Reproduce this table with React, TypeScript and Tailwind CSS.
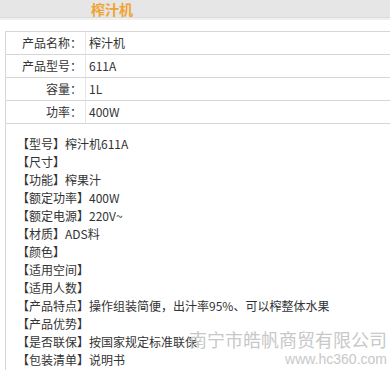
import React from "react";

const specs = [
  { label: "产品名称：", value: "榨汁机" },
  { label: "产品型号：", value: "611A" },
  { label: "容量：", value: "1L" },
  { label: "功率：", value: "400W" },
];

const details = [
  ["型号", "榨汁机611A"],
  ["尺寸", ""],
  ["功能", "榨果汁"],
  ["额定功率", "400W"],
  ["额定电源", "220V~"],
  ["材质", "ADS料"],
  ["颜色", ""],
  ["适用空间", ""],
  ["适用人数", ""],
  ["产品特点", "操作组装简便，出汁率95%、可以榨整体水果"],
  ["产品优势", ""],
  ["是否联保", "按国家规定标准联保"],
  ["包装清单", "说明书"],
];

export default function App() {
  return (
    <div
      className="relative w-[390px] h-[370px] overflow-hidden bg-white text-[12px] text-[#333]"
      style={{ fontFamily: '"Noto Sans CJK SC", "Noto Sans", sans-serif' }}
    >
      {/* 标题栏 */}
      <div className="h-[20px] bg-[#e6e6e6] border-b-2 border-[#f0f0f0] shadow-[inset_0_-1px_0_#dcdcdc]">
        <div className="w-[224px] text-center text-[14px] leading-[18px] font-bold text-[#f0a332]">
          榨汁机
        </div>
      </div>

      <div className="ml-[5px] mt-[11px] border-l border-[#d6d6d6] h-[340px]">
        {/* 参数表 */}
        <div className="border-t border-[#d6d6d6]">
          {specs.map((s) => (
            <div key={s.label} className="flex h-[23px] border-b border-[#d6d6d6] leading-[22px]">
              <div className="w-[80px] pr-[3px] text-right border-r border-[#e6e6e6]">{s.label}</div>
              <div className="pl-[3px]">{s.value}</div>
            </div>
          ))}
        </div>

        {/* 详细说明 */}
        <div className="pl-[11px] pt-[11px] leading-[18px]">
          {details.map(([k, v]) => (
            <div key={k} className="whitespace-nowrap">
              【{k}】{v}
            </div>
          ))}
        </div>
      </div>

      {/* 水印 */}
      <div className="absolute right-[3px] top-[329px] text-right text-[#c8c8c8] pointer-events-none">
        <div className="text-[18px] leading-[21px] whitespace-nowrap">南宁市皓帆商贸有限公司</div>
        <div className="mt-[2px] text-[14px] leading-[15px]" style={{ fontFamily: '"Liberation Sans", Arial, sans-serif' }}>
          www.hc360.com
        </div>
      </div>
    </div>
  );
}
